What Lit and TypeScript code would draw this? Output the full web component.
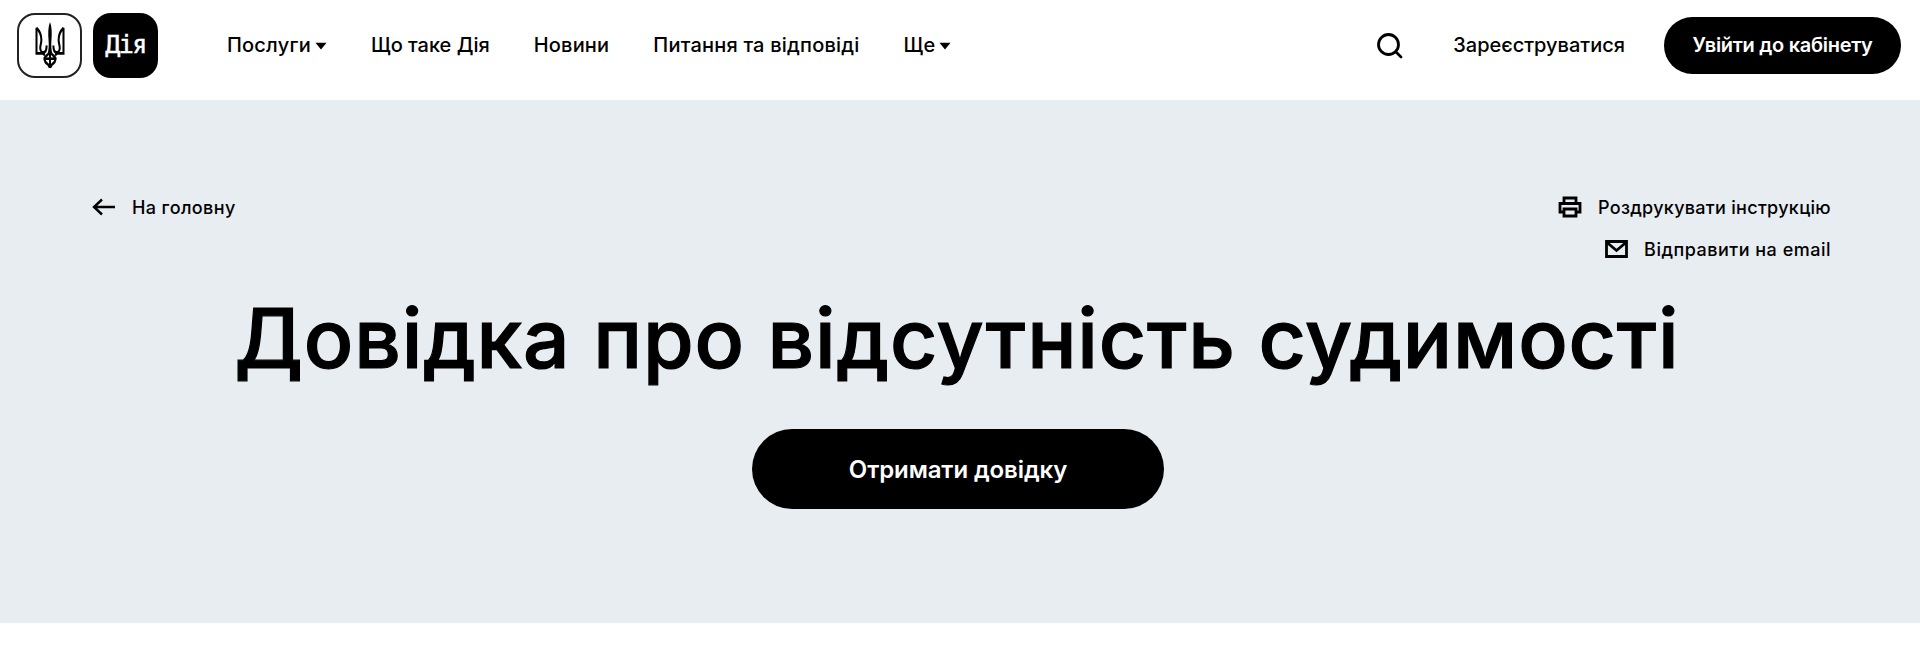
import { LitElement, html, css, svg } from "lit";
import { customElement } from "lit/decorators.js";

const caret = html`<svg class="caret" viewBox="0 0 12 8" width="12" height="8"><path d="M0.500 0.800h11L6 7.400z" fill="#000"/></svg>`;

const trident = svg`
  <g fill="none" stroke="#000" stroke-width="2.700" stroke-linejoin="miter">
    <path d="M20 0c-2.500 5-2.800 11-1.900 19 .5 5 .2 9-1.100 13h6c-1.300-4-1.600-8-1.100-13 .9-8 .6-14-1.900-19z" fill="#000" stroke="none"/>
    <path d="M2 6v26h8c1.500 0 2.500 1 2.500 2.500M2 6c4 3 6.500 7 6.500 12.500 0 3-1.500 5-1.500 8 0 3 2 4.500 4 4.500 3 0 4.500-3 4.500-7"/>
    <path d="M38 6v26h-8c-1.500 0-2.500 1-2.500 2.500M38 6c-4 3-6.500 7-6.500 12.500 0 3 1.500 5 1.500 8 0 3-2 4.500-4 4.500-3 0-4.500-3-4.500-7"/>
    <path d="M12 37.500h16"/>
    <path d="M20 30.500c-1.500 2.500-5.500 3.500-7.500 6.500 0 3 3 5.500 5 6.500l2.500 3.500 2.500-3.500c2-1 5-3.500 5-6.500-2-3-6-4-7.500-6.500z"/>
    <path d="M20 32v14"/>
  </g>`;

@customElement("app-root")
export class AppRoot extends LitElement {
  static styles = css`
    :host { display: block; width: 100%; height: 659px; background: #fff; color: #000;
      font-family: Inter, "Liberation Sans", sans-serif; overflow: hidden; }
    header { height: 100px; box-sizing: border-box; display: flex; align-items: center; padding: 0 19px 10px 17px; }
    .logos { display: flex; gap: 11px; }
    .logo { width: 65px; height: 65px; box-sizing: border-box; border-radius: 18px; display: flex; align-items: center; justify-content: center; }
    .gerb { border: 2px solid #222; background: #fff; }
    .dia { background: #000; color: #fff; font-family: "DejaVu Sans Mono", monospace; font-size: 25px; font-weight: 400; -webkit-text-stroke: 0.5px #fff; letter-spacing: -1.500px; padding-bottom: 2px; }
    nav { display: flex; gap: 44px; margin-left: 69px; font-size: 20px; font-weight: 500; letter-spacing: 0.2px; }
    nav a { display: flex; align-items: center; gap: 4px; white-space: nowrap; }
    nav a.tight { letter-spacing: 0; }
    .caret { margin-top: 1px; }
    .right { margin-left: auto; display: flex; align-items: center; }
    .search { display: block; margin-right: 50px; }
    .reg { font-size: 20px; font-weight: 500; margin-right: 39px; white-space: nowrap; }
    .login { background: #000; color: #fff; height: 57px; width: 237px; border-radius: 29px; display: flex; align-items: center; justify-content: center; font-size: 20px; font-weight: 600; letter-spacing: -0.3px; white-space: nowrap; }
    .hero { background: #e8edf1; height: 523px; box-sizing: border-box; padding: 92px 89px 0 92px; }
    .top { display: flex; justify-content: space-between; align-items: flex-start; }
    .back { display: flex; align-items: center; gap: 17px; font-size: 18px; font-weight: 500; letter-spacing: 0.4px; height: 30px; }
    .actions { display: flex; flex-direction: column; align-items: flex-end; gap: 12px; font-size: 18px; font-weight: 500; letter-spacing: 0.3px; }
    .actions a { display: flex; align-items: center; gap: 16px; height: 30px; white-space: nowrap; }
    .actions a.wide { letter-spacing: 0.5px; }
    h1 { margin: 25px -83px 0 -92px; text-align: center; font-size: 82px; line-height: 100px; font-weight: 500; -webkit-text-stroke: 1.2px #000; letter-spacing: 0.85px; white-space: nowrap; }
    .cta-row { display: flex; justify-content: center; margin: 40px -85px 0 -92px; }
    .cta { width: 412px; height: 80px; border-radius: 40px; background: #000; color: #fff; display: flex; align-items: center; justify-content: center; font-size: 24px; font-weight: 600; letter-spacing: -0.1px; }
  `;

  render() {
    return html`
      <header>
        <div class="logos">
          <div class="logo gerb"><svg width="30" height="46" viewBox="0 0 40 47" preserveAspectRatio="none">${trident}</svg></div>
          <div class="logo dia">Дія</div>
        </div>
        <nav>
          <a>Послуги ${caret}</a>
          <a class="tight">Що таке Дія</a>
          <a>Новини</a>
          <a>Питання та відповіді</a>
          <a>Ще ${caret}</a>
        </nav>
        <div class="right">
          <svg class="search" width="27" height="27" viewBox="0 0 27 27" fill="none" stroke="#000" stroke-width="2.800" stroke-linecap="round"><circle cx="12.500" cy="12.500" r="10"/><path d="M20 20l5 5"/></svg>
          <a class="reg">Зареєструватися</a>
          <a class="login">Увійти до кабінету</a>
        </div>
      </header>
      <section class="hero">
        <div class="top">
          <a class="back">
            <svg width="23" height="18" viewBox="0 0 23 18" fill="none" stroke="#000" stroke-width="2.400"><path d="M23 9H2M10 1.500L2 9l8 7.500"/></svg>
            На головну
          </a>
          <div class="actions">
            <a>
              <svg width="24" height="22" viewBox="0 0 24 22" fill="none" stroke="#000" stroke-width="2.800"><path d="M6 7V2h12v5M6 16H2V7.500h20V16h-4"/><path d="M6 13h12v7H6z"/></svg>
              Роздрукувати інструкцію
            </a>
            <a class="wide">
              <svg width="23" height="18" viewBox="0 0 23 18" fill="none" stroke="#000" stroke-width="2.800"><path d="M1.500 1.500h20v15h-20z"/><path d="M2 2.500l9.500 8 9.500-8"/></svg>
              Відправити на email
            </a>
          </div>
        </div>
        <h1>Довідка про відсутність судимості</h1>
        <div class="cta-row"><a class="cta">Отримати довідку</a></div>
      </section>
    `;
  }
}
